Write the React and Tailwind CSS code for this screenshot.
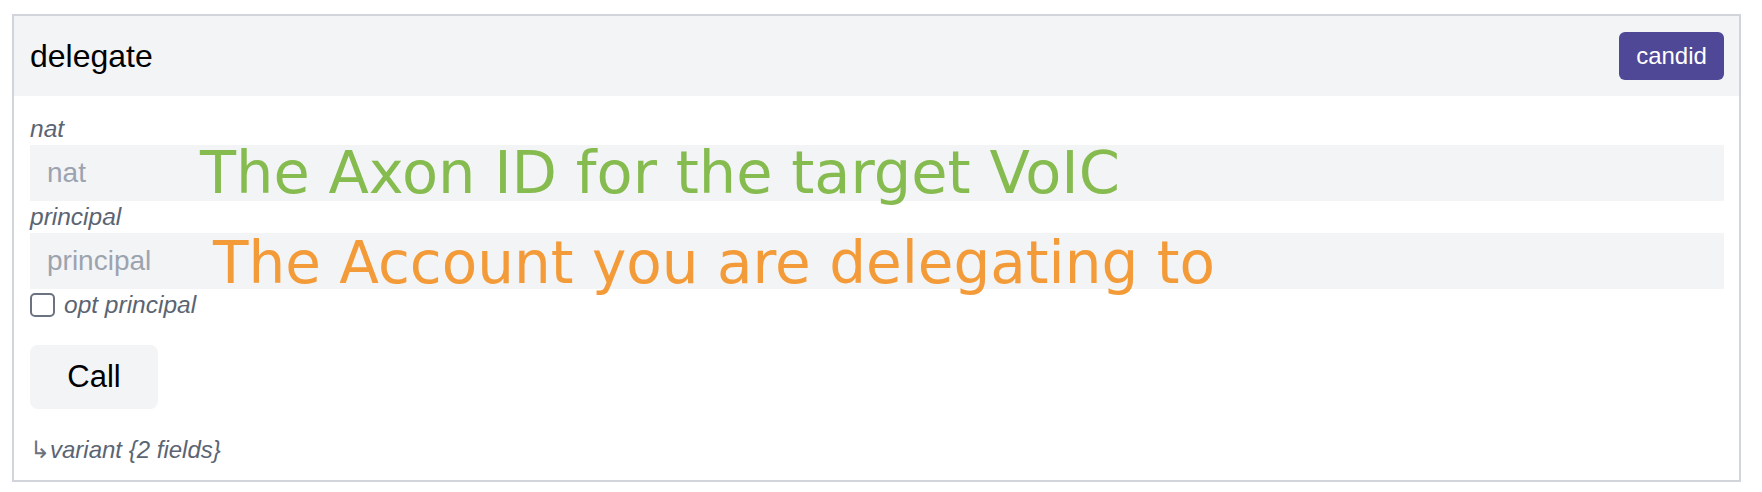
import React from 'react';

const ui = { fontFamily: '"Liberation Sans", Arial, sans-serif' };
const note = { fontFamily: '"DejaVu Sans", sans-serif' };

function Field({ label, placeholder, hint, hintClass }) {
  return (
    <div>
      <div className="text-[24.5px] leading-[32px] italic text-[#5b6472]">{label}</div>
      <div className="relative">
        <input
          className="block w-full h-[56px] bg-[#f3f4f6] pl-[17px] text-[28px] text-black placeholder:text-[#9ca3af] outline-none"
          style={ui}
          placeholder={placeholder}
        />
        {/* annotation laid over the input */}
        <span className={`absolute leading-none whitespace-nowrap pointer-events-none ${hintClass}`} style={note}>
          {hint}
        </span>
      </div>
    </div>
  );
}

export default function App() {
  return (
    <div className="bg-white min-h-screen pt-[14px] pl-[12px]" style={ui}>
      <div className="w-[1729px] border-2 border-[#d1d5db]">
        {/* Header */}
        <div className="h-[80px] bg-[#f3f4f6] flex items-center justify-between pl-[16px] pr-[15px]">
          <h2 className="text-[32px] text-black">delegate</h2>
          <button className="w-[105px] h-[48px] rounded-[6px] bg-[#4f4896] text-white text-[24px]">candid</button>
        </div>

        {/* Body */}
        <div className="pt-[17px] pl-[16px] pr-[15px] pb-[14px]">
          <Field
            label="nat"
            placeholder="nat"
            hint="The Axon ID for the target VoIC"
            hintClass="text-[59px] text-[#86bb50] left-[170px] top-[-2px]"
          />
          <Field
            label="principal"
            placeholder="principal"
            hint="The Account you are delegating to"
            hintClass="text-[58px] text-[#f39b39] left-[183px] top-[1px]"
          />
          <label className="flex items-center h-[32px] gap-[9px]">
            <span className="w-[25px] h-[24px] rounded-[5px] border-2 border-[#6b7280] bg-white" />
            <span className="text-[24.5px] italic text-[#5b6472]">opt principal</span>
          </label>

          <button className="mt-[24px] w-[128px] h-[64px] rounded-[8px] bg-[#f3f4f6] text-[31px] text-black">Call</button>

          <div className="mt-[25px] text-[24px] leading-[32px] text-[#5b6472]">
            <span className="text-[#6b7280]">↳</span><span className="italic">variant {'{'}2 fields{'}'}</span>
          </div>
        </div>
      </div>
    </div>
  );
}
